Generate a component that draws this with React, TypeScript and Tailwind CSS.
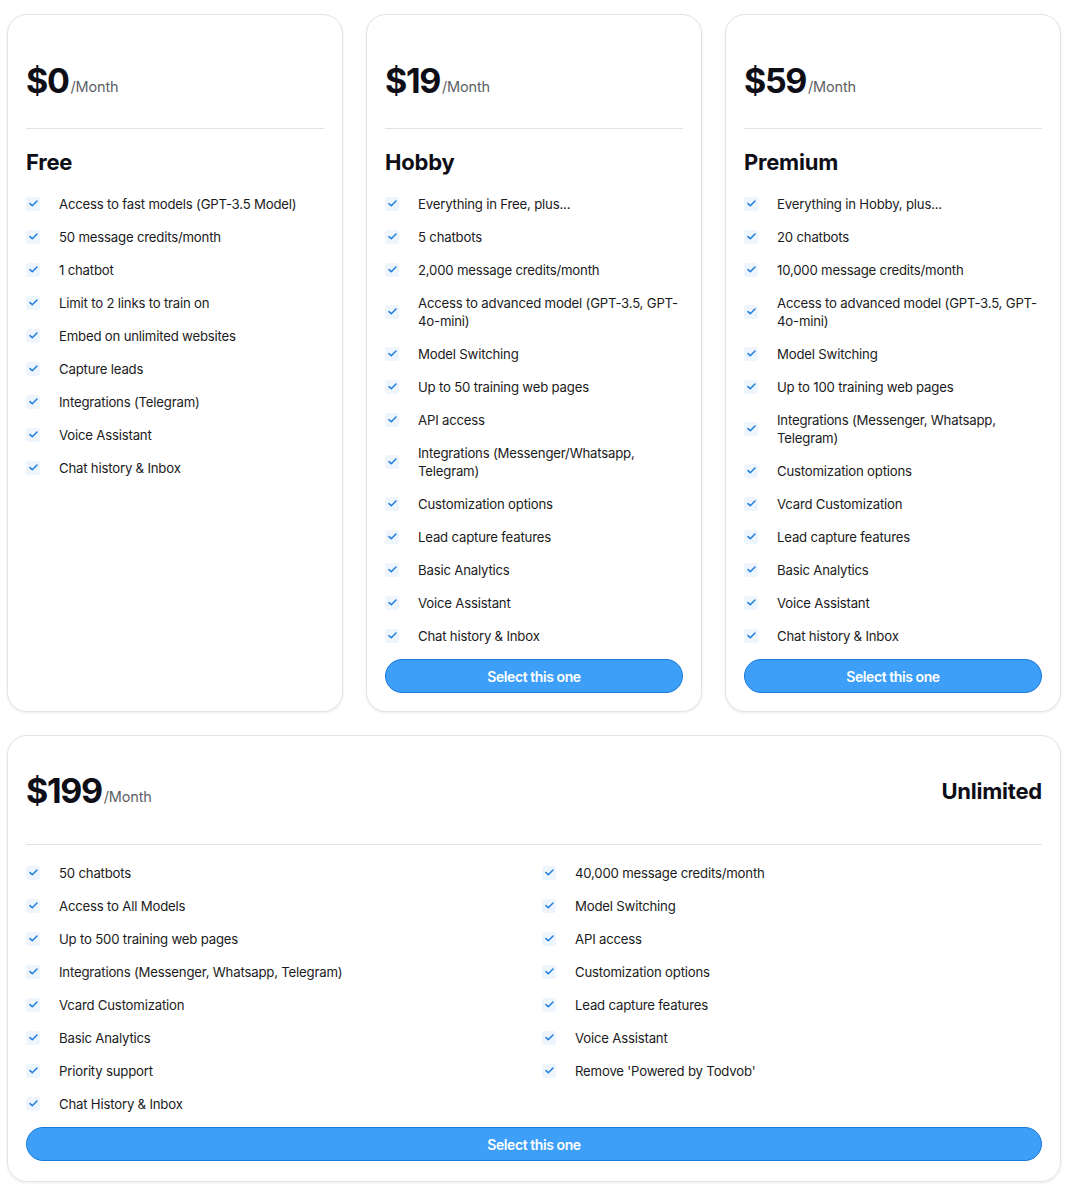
import type { ReactNode } from "react";

type Plan = {
  price: string;
  name: string;
  features: string[];
  button?: boolean;
};

const plans: Plan[] = [
  {
    price: "$0",
    name: "Free",
    features: [
      "Access to fast models (GPT-3.5 Model)",
      "50 message credits/month",
      "1 chatbot",
      "Limit to 2 links to train on",
      "Embed on unlimited websites",
      "Capture leads",
      "Integrations (Telegram)",
      "Voice Assistant",
      "Chat history & Inbox",
    ],
  },
  {
    price: "$19",
    name: "Hobby",
    button: true,
    features: [
      "Everything in Free, plus...",
      "5 chatbots",
      "2,000 message credits/month",
      "Access to advanced model (GPT-3.5, GPT-4o-mini)",
      "Model Switching",
      "Up to 50 training web pages",
      "API access",
      "Integrations (Messenger/Whatsapp, Telegram)",
      "Customization options",
      "Lead capture features",
      "Basic Analytics",
      "Voice Assistant",
      "Chat history & Inbox",
    ],
  },
  {
    price: "$59",
    name: "Premium",
    button: true,
    features: [
      "Everything in Hobby, plus...",
      "20 chatbots",
      "10,000 message credits/month",
      "Access to advanced model (GPT-3.5, GPT-4o-mini)",
      "Model Switching",
      "Up to 100 training web pages",
      "Integrations (Messenger, Whatsapp, Telegram)",
      "Customization options",
      "Vcard Customization",
      "Lead capture features",
      "Basic Analytics",
      "Voice Assistant",
      "Chat history & Inbox",
    ],
  },
];

const unlimitedLeft = [
  "50 chatbots",
  "Access to All Models",
  "Up to 500 training web pages",
  "Integrations (Messenger, Whatsapp, Telegram)",
  "Vcard Customization",
  "Basic Analytics",
  "Priority support",
  "Chat History & Inbox",
];

const unlimitedRight = [
  "40,000 message credits/month",
  "Model Switching",
  "API access",
  "Customization options",
  "Lead capture features",
  "Voice Assistant",
  "Remove 'Powered by Todvob'",
];

function Check() {
  return (
    <span className="flex h-[14px] w-[14px] shrink-0 items-center justify-center rounded-[3px] bg-[#eef5fd]">
      <svg width="9" height="7" viewBox="0 0 9 7" fill="none">
        <path
          d="M1 3.6 3.3 5.8 8 1"
          stroke="#1f7fdf"
          strokeWidth="1.5"
          strokeLinecap="round"
          strokeLinejoin="round"
        />
      </svg>
    </span>
  );
}

function Feature({ text }: { text: string }) {
  return (
    <li className="flex items-center py-[7.5px]">
      <Check />
      <span className="ml-[19px] text-[13.2px] leading-[18px] tracking-[-0.015em] text-[#1b1b22]">
        {text}
      </span>
    </li>
  );
}

function Price({ value }: { value: string }) {
  return (
    <div className="flex items-end">
      <span className="text-[34px] font-bold leading-[40px] tracking-[-0.04em] text-[#0e0e17]">
        {value}
      </span>
      <span className="mb-[4px] ml-[2px] text-[14.5px] leading-5 tracking-[-0.01em] text-[#5c5f66]">
        /Month
      </span>
    </div>
  );
}

function Button() {
  return (
    <button
      type="button"
      className="h-[34px] w-full rounded-full border border-[#1b7ad9] bg-[#3d9ff8] text-[14px] font-semibold tracking-[-0.03em] text-white"
    >
      Select this one
    </button>
  );
}

function Card({ children, className = "" }: { children: ReactNode; className?: string }) {
  return (
    <div
      className={`rounded-[20px] border border-[#e4e4e4] bg-white shadow-[0_1px_3px_rgba(0,0,0,0.08)] ${className}`}
    >
      {children}
    </div>
  );
}

export default function App() {
  return (
    <div className="min-h-[1191px] bg-white pt-[14px] font-['Inter',sans-serif]">
      <div className="ml-[7px] w-[1054px]">
        <div className="grid grid-cols-3 gap-[23px]">
          {plans.map((plan) => (
            <Card key={plan.name} className="flex flex-col px-[18px] pb-[18px] pt-[46px]">
              <Price value={plan.price} />
              <div className="mt-[27px] h-px bg-[#e2e2e2]" />
              <h2 className="mt-[19px] text-[22px] font-bold leading-[28px] tracking-[-0.01em] text-[#0e0e17]">
                {plan.name}
              </h2>
              <ul className="mt-[11px]">
                {plan.features.map((f) => (
                  <Feature key={f} text={f} />
                ))}
              </ul>
              {plan.button && (
                <div className="mt-[7px]">
                  <Button />
                </div>
              )}
            </Card>
          ))}
        </div>

        <Card className="mt-[23px] px-[18px] pb-[20px] pt-[35px]">
          <div className="flex items-center justify-between">
            <Price value="$199" />
            <h2 className="text-[22px] font-bold leading-[28px] tracking-[-0.01em] text-[#0e0e17]">
              Unlimited
            </h2>
          </div>
          <div className="mt-[33px] h-px bg-[#e2e2e2]" />
          <div className="mt-[11px] grid grid-cols-2 gap-x-4">
            <ul>
              {unlimitedLeft.map((f) => (
                <Feature key={f} text={f} />
              ))}
            </ul>
            <ul>
              {unlimitedRight.map((f) => (
                <Feature key={f} text={f} />
              ))}
            </ul>
          </div>
          <div className="mt-[7px]">
            <Button />
          </div>
        </Card>
      </div>
    </div>
  );
}
